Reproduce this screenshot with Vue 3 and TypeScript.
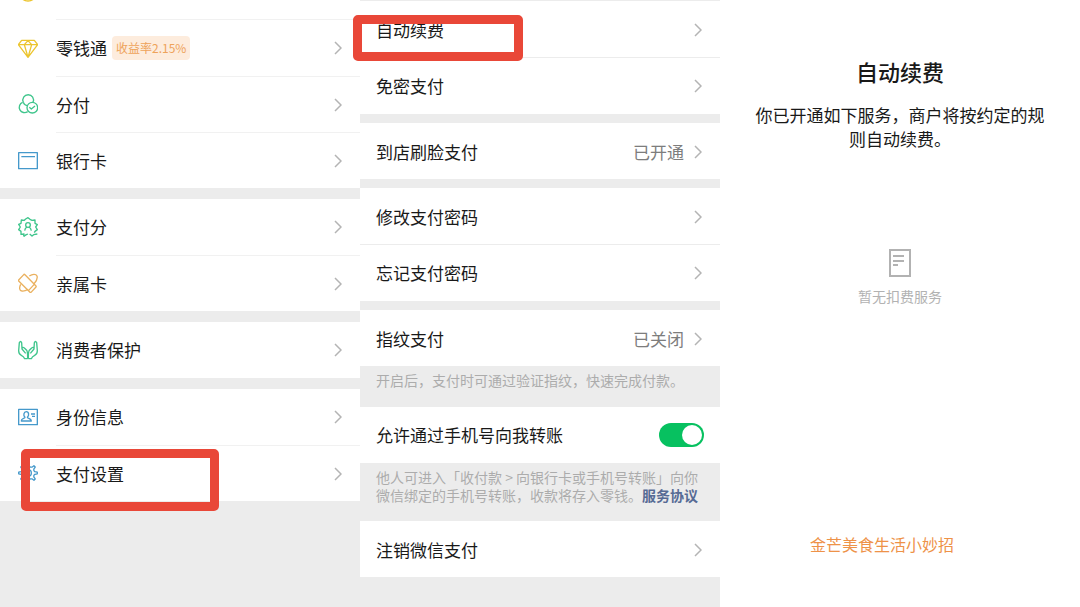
<script setup lang="ts">
import { ref } from 'vue'

type IconName = 'diamond' | 'circles' | 'card' | 'score' | 'family' | 'hands' | 'identity' | 'gear'

interface WalletItem {
  label: string
  icon: IconName
  badge?: string
}

const walletGroups: WalletItem[][] = [
  [
    { label: '零钱通', icon: 'diamond', badge: '收益率2.15%' },
    { label: '分付', icon: 'circles' },
    { label: '银行卡', icon: 'card' },
  ],
  [
    { label: '支付分', icon: 'score' },
    { label: '亲属卡', icon: 'family' },
  ],
  [{ label: '消费者保护', icon: 'hands' }],
  [
    { label: '身份信息', icon: 'identity' },
    { label: '支付设置', icon: 'gear' },
  ],
]

interface SettingItem {
  label: string
  value?: string
}

const settingGroups: SettingItem[][] = [
  [{ label: '自动续费' }, { label: '免密支付' }],
  [{ label: '到店刷脸支付', value: '已开通' }],
  [{ label: '修改支付密码' }, { label: '忘记支付密码' }],
  [{ label: '指纹支付', value: '已关闭' }],
]

const allowTransfer = ref(true)

function ring(count: number, steps: [number, number][]): string {
  const points: string[] = []
  for (let i = 0; i < count; i++) {
    for (const [offset, radius] of steps) {
      const angle = ((i + offset) / count) * Math.PI * 2 - Math.PI / 2
      points.push(`${(30 + radius * Math.cos(angle)).toFixed(1)} ${(30 + radius * Math.sin(angle)).toFixed(1)}`)
    }
  }
  return `M${points.join('L')}Z`
}

const gearPath = ring(8, [[-0.12, 28], [0.12, 28], [0.24, 21], [0.5, 19], [0.76, 21]])
</script>

<template>
  <main class="screens">
    <section class="screen wallet" aria-label="钱包">
      <div class="peek">
        <svg class="icon yellow" viewBox="0 0 60 60" aria-hidden="true"><circle cx="30" cy="30" r="27" /></svg>
        <span class="peek-line"></span>
      </div>
      <div v-for="(group, g) in walletGroups" :key="g" class="group">
        <button v-for="item in group" :key="item.label" type="button" class="row">
          <svg v-if="item.icon === 'diamond'" class="icon yellow" viewBox="0 0 60 60" aria-hidden="true">
            <path d="M11 7H49L59 20L30 58L1 20ZM1 20H59M19 20L30 8L41 20M19 20L30 58L41 20" />
          </svg>
          <svg v-else-if="item.icon === 'circles'" class="icon green" viewBox="0 0 60 60" aria-hidden="true">
            <path d="M16 25A16 16 0 1 1 45 25" />
            <path d="M16 25C18 31 24 35 30 35" />
            <path d="M14 25A16 16 0 1 0 29 53" />
            <circle cx="43" cy="41" r="16" />
            <path d="M34 40L40 45L51 36" />
          </svg>
          <svg v-else-if="item.icon === 'card'" class="icon blue" viewBox="0 0 60 60" aria-hidden="true">
            <path d="M2 8H58V56H2ZM10 20H51" />
          </svg>
          <svg v-else-if="item.icon === 'score'" class="icon green" viewBox="0 0 60 60" aria-hidden="true">
            <path d="M17 58L18 51L9 52L9 43L2 38L7 30L2 22L9 19L10 9L19 10L23 6L30 2L36 7L42 10L51 9L51 19L58 23L53 30L58 38L51 43L49 47" />
            <path d="M17 58L25 53L30 51M35 51L42 57L47 53L58 51" />
            <circle cx="30" cy="24" r="7" />
            <path d="M20 41C21 34 25 31 27 30M33 30C36 32 39 35 40 41" />
          </svg>
          <svg v-else-if="item.icon === 'family'" class="icon orange" viewBox="0 0 60 60" aria-hidden="true">
            <path d="M18 4Q19 3 21 5L54 39Q55 40 54 42L39 58Q38 59 36 58L2 24Q1 23 2 21ZM32 52L48 35" />
            <path d="M34 9C43 3 54 2 57 9C59 16 55 25 48 32M8 34C3 44 4 53 12 54C19 55 25 52 30 49" />
          </svg>
          <svg v-else-if="item.icon === 'hands'" class="icon green" viewBox="0 0 60 60" aria-hidden="true">
            <path d="M29 56H20Q18 50 10 46Q2 42 2 32L4 8Q8 1 11 8L12 27L23 40M12 27Q13 19 19 24L26 31Q29 34 29 56" />
            <path d="M31 56H40Q42 50 50 46Q58 42 58 32L56 8Q52 1 49 8L48 27L37 40M48 27Q47 19 41 24L34 31Q31 34 31 56" />
          </svg>
          <svg v-else-if="item.icon === 'identity'" class="icon blue" viewBox="0 0 60 60" aria-hidden="true">
            <path d="M2 7H58V53H2ZM39 21H51M42 28H51" />
            <path d="M21 31C15 26 17 14 25 14C33 14 34 26 28 31C28 35 40 34 40 42H10C9 34 21 35 21 31Z" />
          </svg>
          <svg v-else class="icon blue" viewBox="0 0 60 60" aria-hidden="true">
            <path :d="gearPath" />
            <circle cx="30" cy="30" r="10" />
          </svg>
          <span class="line">
            <span class="label">{{ item.label }}</span>
            <span v-if="item.badge" class="badge">{{ item.badge }}</span>
            <svg class="chevron" viewBox="0 0 8 14" aria-hidden="true"><path d="M1 1L7 7L1 13" /></svg>
          </span>
        </button>
      </div>
      <div class="mark mark-settings" aria-hidden="true"></div>
    </section>

    <section class="screen settings" aria-label="支付设置">
      <div v-for="(group, g) in settingGroups" :key="g" class="group">
        <button v-for="item in group" :key="item.label" type="button" class="row">
          <span class="label">{{ item.label }}</span>
          <span v-if="item.value" class="value">{{ item.value }}</span>
          <svg class="chevron" viewBox="0 0 8 14" aria-hidden="true"><path d="M1 1L7 7L1 13" /></svg>
        </button>
      </div>
      <p class="hint short">开启后，支付时可通过验证指纹，快速完成付款。</p>
      <div class="group">
        <div class="row toggle-row">
          <label class="label" for="allow-transfer">允许通过手机号向我转账</label>
          <input id="allow-transfer" v-model="allowTransfer" class="switch" type="checkbox" role="switch" />
        </div>
      </div>
      <p class="hint long">
        他人可进入「收付款 &gt; 向银行卡或手机号转账」向你微信绑定的手机号转账，收款将存入零钱。<a href="#agreement">服务协议</a>
      </p>
      <div class="group">
        <button type="button" class="row">
          <span class="label">注销微信支付</span>
          <svg class="chevron" viewBox="0 0 8 14" aria-hidden="true"><path d="M1 1L7 7L1 13" /></svg>
        </button>
      </div>
      <div class="mark mark-renewal" aria-hidden="true"></div>
    </section>

    <section class="screen renewal" aria-label="自动续费">
      <h1>自动续费</h1>
      <p class="intro">你已开通如下服务，商户将按约定的规则自动续费。</p>
      <div class="empty">
        <svg viewBox="0 0 22 28" aria-hidden="true"><path d="M1 1H21V27H1ZM4 7H15M4 12H15M4 16H9" /></svg>
        <p>暂无扣费服务</p>
      </div>
      <p class="author">金芒美食生活小妙招</p>
    </section>
  </main>
</template>

<style>
body {
  margin: 0;
}
</style>

<style scoped>
.screens {
  display: grid;
  grid-template-columns: repeat(3, minmax(0, 1fr));
  min-height: 100vh;
  color: #191919;
  font-family: "Noto Sans CJK SC", sans-serif;
  font-size: 17px;
  line-height: 24px;
}

.screen {
  position: relative;
  background: #ececec;
}

p,
h1 {
  margin: 0;
}

.group {
  background: #fff;
}

.row {
  display: flex;
  align-items: center;
  box-sizing: border-box;
  width: 100%;
  height: 56px;
  padding: 0 18px 0 16px;
  border: 0;
  background: none;
  color: inherit;
  font: inherit;
  text-align: left;
}

.label {
  flex: none;
}

.chevron {
  flex: none;
  width: 8px;
  height: 14px;
  margin-left: auto;
  fill: none;
  stroke: #b4b4b4;
  stroke-width: 1.5;
}

.peek {
  display: flex;
  gap: 18px;
  height: 20px;
  padding-left: 18px;
  overflow: hidden;
  background: #fff;
}

.peek .icon {
  margin-top: -18px;
}

.peek-line {
  flex: 1;
  border-bottom: 1px solid #f1f1f1;
}

.icon {
  display: block;
  flex: none;
  width: 20px;
  height: 20px;
  fill: none;
  stroke-width: 4;
  stroke-linejoin: round;
}

.yellow {
  stroke: #ecc52f;
}

.green {
  stroke: #3fc58c;
}

.blue {
  stroke: #4599cb;
}

.orange {
  stroke: #eab15f;
}

.wallet .group + .group {
  margin-top: 11px;
}

.wallet .row {
  gap: 18px;
  padding: 0 0 0 18px;
}

.line {
  display: flex;
  flex: 1;
  align-items: center;
  align-self: stretch;
  padding-right: 18px;
}

.wallet .row + .row .line {
  border-top: 1px solid #f1f1f1;
}

.badge {
  margin-left: 5px;
  padding: 0 4px;
  border-radius: 4px;
  background: #fdecdd;
  color: #eea35a;
  font-size: 12px;
}

.settings {
  padding-top: 1px;
}

.settings .group + .group {
  margin-top: 9px;
}

.settings button.row:first-child {
  padding-top: 2px;
}

.settings .row + .row {
  height: 57px;
  border-top: 1px solid #ececec;
}

.value {
  margin-left: auto;
  color: #7d7d7d;
}

.value + .chevron {
  margin-left: 10px;
}

.hint {
  padding: 5px 16px 0;
  box-sizing: border-box;
  color: #acacac;
  font-size: 14px;
  line-height: 18px;
}

.short {
  min-height: 41px;
}

.long {
  min-height: 58px;
}

.hint a {
  color: #576b95;
  font-weight: 700;
  text-decoration: none;
}

.toggle-row {
  justify-content: space-between;
  padding-right: 16px;
}

.switch {
  display: flex;
  align-items: center;
  box-sizing: border-box;
  width: 45px;
  height: 24px;
  margin: 0;
  padding: 0 2px;
  border-radius: 12px;
  background: #d5d5d5;
  appearance: none;
}

.switch::before {
  width: 20px;
  height: 20px;
  border-radius: 50%;
  background: #fff;
  content: "";
}

.switch:checked {
  justify-content: flex-end;
  background: #07c160;
}

.mark {
  position: absolute;
  z-index: 1;
  box-sizing: border-box;
  border: 9px solid #e94738;
  border-radius: 5px;
  pointer-events: none;
}

.mark-settings {
  top: 449px;
  left: 21px;
  width: 198px;
  height: 62px;
}

.mark-renewal {
  top: 15px;
  left: -7px;
  width: 170px;
  height: 46px;
}

.renewal {
  display: flex;
  flex-direction: column;
  align-items: center;
  box-sizing: border-box;
  padding: 55px 34px 51px;
  background: #fff;
  text-align: center;
}

h1 {
  font-size: 22px;
  font-weight: 500;
  line-height: 32px;
}

.intro {
  margin-top: 16px;
}

.empty {
  display: flex;
  flex-direction: column;
  align-items: center;
  gap: 7px;
  margin-top: 98px;
  color: #b2b2b2;
  font-size: 14px;
}

.empty svg {
  width: 22px;
  height: 28px;
  fill: none;
  stroke: #b2b2b2;
  stroke-width: 2;
}

.author {
  margin-top: auto;
  padding-right: 36px;
  color: #ee9248;
  font-size: 16px;
}
</style>
